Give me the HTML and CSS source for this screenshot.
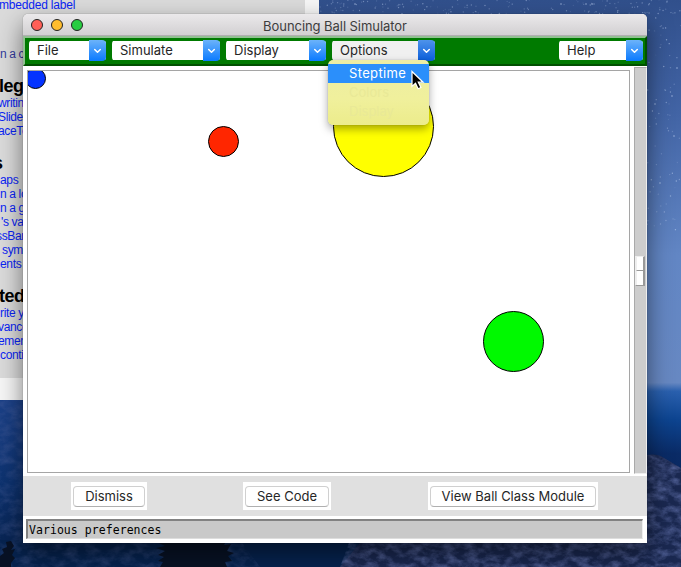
FILE: index.html
```
<!DOCTYPE html>
<html lang="en">
<head>
<meta charset="utf-8">
<title>Bouncing Ball Simulator</title>
<link rel="stylesheet" href="styles.css">
</head>
<body>
<div class="desktop">
  <svg class="wallpaper" width="681" height="567" viewBox="0 0 681 567">
    <defs>
      <linearGradient id="sky" x1="0" y1="0" x2="0" y2="1">
        <stop offset="0" stop-color="#31508c"/><stop offset=".2" stop-color="#4264a5"/>
        <stop offset=".45" stop-color="#6286c4"/><stop offset=".675" stop-color="#6788c2"/>
        <stop offset=".69" stop-color="#2a60ae"/><stop offset=".74" stop-color="#0d4490"/>
        <stop offset=".8" stop-color="#0a2b66"/><stop offset="1" stop-color="#061f4c"/>
      </linearGradient>
      <linearGradient id="ridge" x1="0" y1="0" x2="0" y2="1">
        <stop offset="0" stop-color="#1c4188"/><stop offset=".5" stop-color="#0d326f"/><stop offset="1" stop-color="#071f48"/>
      </linearGradient>
      <filter id="rock" x="0" y="0" width="100%" height="100%" color-interpolation-filters="sRGB">
        <feTurbulence type="fractalNoise" baseFrequency=".09 .14" numOctaves="4" seed="7"/>
        <feColorMatrix values="0 0 0 0 .36  0 0 0 0 .42  0 0 0 0 .64  1.6 0 0 0 -.58"/>
        <feComposite in2="SourceGraphic" operator="in"/>
      </filter>
    </defs>
    <rect width="681" height="567" fill="url(#sky)"/>
    <path d="M0 399H23L60 470V567H0z" fill="url(#ridge)"/>
    <path d="M647 455Q658 453 664 458L671 462L681 468V567H340L362 540H640z" fill="#1a2850"/>
    <path d="M0 540H362L340 567H0z" fill="#06234f"/>
    <path d="M350 540H647V455Q658 453 664 458L681 468V567H340z" filter="url(#rock)"/>
    <path d="M0 399H23V540H240L260 567H0z" filter="url(#rock)" opacity=".4"/>
    <g fill="#081225">
      <path d="M160 567l3-5-5-1 6-4-6-2 7-4-9-3 9-2-12-6h74l-3 5 7-1-4 7 7 2-6 3 4 5-7 1 2 5z"/>
      <path d="M0 567v-11l4-3-2-4 5-2-1-5 5-1 3 5-3 4 4-1-3 6 3 3-4 5v4z"/>
    </g>
    <g class="stars" id="stars"></g>
  </svg>

  <section class="window docs">
    <p class="entry embedded">mbedded label</p>
    <p class="entry visited">n a c</p>
    <h2>leg</h2>
    <p class="entry out-w">writing</p><p class="entry out-w">SlideS</p><p class="entry out-w">aceTe</p>
    <h2 class="out-h">s</h2>
    <p class="entry">aps</p><p class="entry">n a lo</p><p class="entry">n a gr</p><p class="entry out-e">'s val</p><p class="entry out-s">ssBar</p><p class="entry sym">symb</p><p class="entry">ents</p>
    <h2>ted</h2>
    <p class="entry">rite yo</p><p class="entry out-w">vance</p><p class="entry out-w">ement</p><p class="entry">contin</p>
  </section>

  <main class="window simulator">
    <header class="titlebar">
      <div class="lights"><i class="close"></i><i class="minimize"></i><i class="zoom"></i></div>
      <h1>Bouncing Ball Simulator</h1>
    </header>
    <nav class="menubar">
      <button class="menu file"><span>File</span><svg viewBox="0 0 17 21"><path d="M5.7 9.5l2.8 2.8 2.8-2.8"/></svg></button>
      <button class="menu simulate"><span>Simulate</span><svg viewBox="0 0 17 21"><path d="M5.7 9.5l2.8 2.8 2.8-2.8"/></svg></button>
      <button class="menu display"><span>Display</span><svg viewBox="0 0 17 21"><path d="M5.7 9.5l2.8 2.8 2.8-2.8"/></svg></button>
      <div class="dropdown">
        <button class="menu options"><span>Options</span><svg viewBox="0 0 17 21"><path d="M5.7 9.5l2.8 2.8 2.8-2.8"/></svg></button>
        <ul class="popup">
          <li class="selected">Steptime</li><li class="muted">Colors</li><li class="muted">Display</li>
        </ul>
        <svg class="cursor" width="16" height="22" viewBox="0 0 16 22"><path d="M2 1.5v15l3.5-3.2 2.6 5.5 2.8-1.3-2.6-5.3h4.8z" fill="#000" stroke="#fff" stroke-width="1.2"/></svg>
      </div>
      <button class="menu help"><span>Help</span><svg viewBox="0 0 17 21"><path d="M5.7 9.5l2.8 2.8 2.8-2.8"/></svg></button>
    </nav>
    <div class="workspace">
      <svg class="balls" width="601" height="401" viewBox="28 71 601 401">
        <g stroke="#000" stroke-width="1">
          <circle cx="35.5" cy="78.5" r="10" fill="#0433ff"/>
          <circle cx="223.5" cy="141.5" r="15" fill="#ff2600"/>
          <circle cx="383.5" cy="126.5" r="50" fill="#ffff00"/>
          <circle cx="513.5" cy="341.5" r="30" fill="#00f900"/>
        </g>
      </svg>
      <div class="scrollbar"><div class="thumb"><i></i><i></i></div></div>
    </div>
    <div class="actions">
      <div class="pad dismiss"><button>Dismiss</button></div>
      <div class="pad code"><button>See Code</button></div>
      <div class="pad module"><button>View Ball Class Module</button></div>
    </div>
    <footer class="status">Various preferences</footer>
  </main>
</div>
<script src="stars.js"></script>
</body>
</html>
```
FILE: styles.css
```
* { box-sizing: border-box; }
body { margin: 0; font-family: Inter, "Liberation Sans", sans-serif; font-size: 13px; color: #222; }
h1, h2, p, ul { margin: 0; padding: 0; }
button { font: inherit; color: inherit; border: 0; padding: 0; background: none; }
.desktop { position: relative; width: 681px; height: 567px; overflow: hidden; }
.wallpaper { display: block; }
.window { position: absolute; }

.docs { left: 0; top: 0; width: 319px; height: 400px; overflow: hidden; background: #dbdbdb; border-right: 14px solid #f6f6f6; border-bottom: 22px solid #f6f6f6; font-family: "Liberation Sans", sans-serif; }
.entry { font-size: 12px; line-height: 14px; letter-spacing: -.35px; color: #0a24f5; white-space: nowrap; }
.embedded { margin-top: -2px; letter-spacing: -.2px; text-indent: -1px; }
.visited { margin-top: 35px; color: #333a9c; }
.docs h2 { margin-top: 15px; font-size: 18px; line-height: 20px; letter-spacing: -.5px; color: #000; text-indent: -1px; }
.docs .visited + h2 { margin-top: 15px; }
.docs .out-h { text-indent: -7px; }
.out-w { text-indent: -2px; }
.out-e { text-indent: 1px; }
.out-s { text-indent: -4px; }
.sym { text-indent: 2px; }

.simulator { left: 23px; top: 14px; width: 624px; height: 529px; background: #fff; border-radius: 5px 5px 0 0; box-shadow: 0 10px 24px rgba(0,0,0,.5), 0 0 1px rgba(0,0,0,.6); display: flex; flex-direction: column; }
.titlebar { position: relative; height: 22px; flex: none; display: flex; align-items: center; justify-content: center; background: linear-gradient(#ebe9eb, #d2d0d2); border-bottom: 1px solid #b1afb1; border-radius: 5px 5px 0 0; }
.titlebar h1 { font-size: 13px; font-weight: 400; line-height: 20px; letter-spacing: -.06px; color: #3d3d3d; padding-top: 2px; }
.lights { position: absolute; left: 8px; top: 5px; display: flex; gap: 8px; }
.lights i { width: 12px; height: 12px; border-radius: 50%; border: 1px solid; }
.close { background: #ff5f57; border-color: #ee524b; }
.minimize { background: #ffbd2e; border-color: #efab20; }
.zoom { background: #28cd41; border-color: #20bd35; }

.menubar { height: 30px; flex: none; display: flex; gap: 6px; align-items: flex-start; padding: 2px 2px 0 4px; background: #007a00; border: 2px solid; border-color: #92c092 #005000 #005000 #92c092; }
.menu { position: relative; height: 21px; display: flex; align-items: center; justify-content: space-between; padding-left: 8px; background: linear-gradient(#fff, #fff) 0 1px / 100% 19px no-repeat; border-radius: 4px; color: #262626; }
.menu span { position: relative; top: -.5px; }
.menu svg { width: 17px; height: 21px; flex: none; border-radius: 0 4px 4px 0; background: linear-gradient(#6cb3fa, #0a7aff); fill: none; stroke: #fff; stroke-width: 1.5; stroke-linecap: round; stroke-linejoin: round; }
.file { width: 77px; }
.simulate { width: 108px; }
.display { width: 100px; }
.options { width: 103px; background-image: linear-gradient(#f0f0f0, #f0f0f0); }
.options svg { background: linear-gradient(#4e93ea, #0a5edb); }
.help { width: 84px; margin-left: auto; }
.dropdown { position: relative; }
.popup { position: absolute; z-index: 2; left: -4px; top: 20px; width: 101px; height: 65px; padding-top: 4px; list-style: none; border-radius: 5px; background: linear-gradient(#ededa4, #f0f09c 60%, #ecec8b); box-shadow: 0 4px 9px rgba(0,0,0,.35), 0 0 1px rgba(0,0,0,.4); }
.popup li { height: 19px; line-height: 19px; padding-left: 21px; }
.popup .selected { background: #2b8ffb; color: #fff; letter-spacing: .35px; }
.popup .muted { color: #e9e997; }
.cursor { position: absolute; z-index: 3; left: 78px; top: 30px; }

.workspace { height: 410px; flex: none; display: flex; padding: 1px 0 2px 4px; }
.balls { margin-top: 3px; box-sizing: content-box; border: 1px solid #a5a5a5; flex: none; display: block; }
.scrollbar { width: 13px; height: 407px; margin-left: 4px; background: #cdcdcd; border: 1px solid #aaa; border-right: 1px solid #eee; border-bottom-color: #eee; display: flex; flex-direction: column; }
.thumb { margin-top: 188px; height: 30px; width: 10px; background: #ccc; border: 1px solid #eee; border-right: 2px solid #999; border-bottom-color: #999; }
.thumb i { display: block; height: 14px; background: #fff; border-left: 1px solid #eee; border-bottom: 1px solid #999; }
.thumb i + i { border-bottom: 0; }

.actions { height: 40px; flex: none; background: #e0e0e0; display: flex; padding: 6px 49px 0 48px; }
.pad { height: 28px; padding: 4px 2px; background: #fff; }
.pad button { display: block; width: 100%; height: 21px; line-height: 19px; border: 1px solid #d0d0d0; border-bottom-color: #b0b0b0; border-radius: 4px; background: #fff; color: #262626; }
.dismiss { width: 76px; margin-right: 96px; }
.code { width: 88px; }
.module { width: 170px; margin-left: auto; letter-spacing: -.08px; }
.status { margin: 3px 4px 0 3px; height: 20px; flex: none; border-top: 2px solid #828282; border-left: 2px solid #828282; border-right: 1px solid #eee; border-bottom: 1px solid #ddd; background: #c9c9c9; font: 11.5px/19px "DejaVu Sans Mono", monospace; letter-spacing: .05px; color: #000; padding-left: 1px; }
```
FILE: stars.js
```
// Scatter faint stars over the visible sky.
const group = document.getElementById('stars');
let seed = 19;
const random = () => (seed = (seed * 16807) % 2147483647) / 2147483647;
function addStar(x, y, opacity) {
  const star = document.createElementNS('http://www.w3.org/2000/svg', 'circle');
  star.setAttribute('cx', x);
  star.setAttribute('cy', y);
  star.setAttribute('r', 0.7);
  star.setAttribute('fill', '#c5d7f6');
  star.setAttribute('opacity', opacity);
  group.append(star);
}
for (let i = 0; i < 150; i++) addStar(320 + random() * 361, random() * 14, .1 + random() * .4);
for (let i = 0; i < 75; i++) addStar(647 + random() * 34, random() * 230, .1 + random() * .5);
[[561,4],[586,4],[592,4],[402,14],[677,68],[672,96],[655,104],[674,136],[660,183],[355,4]].forEach(([x, y]) => addStar(x, y, .8));
```
